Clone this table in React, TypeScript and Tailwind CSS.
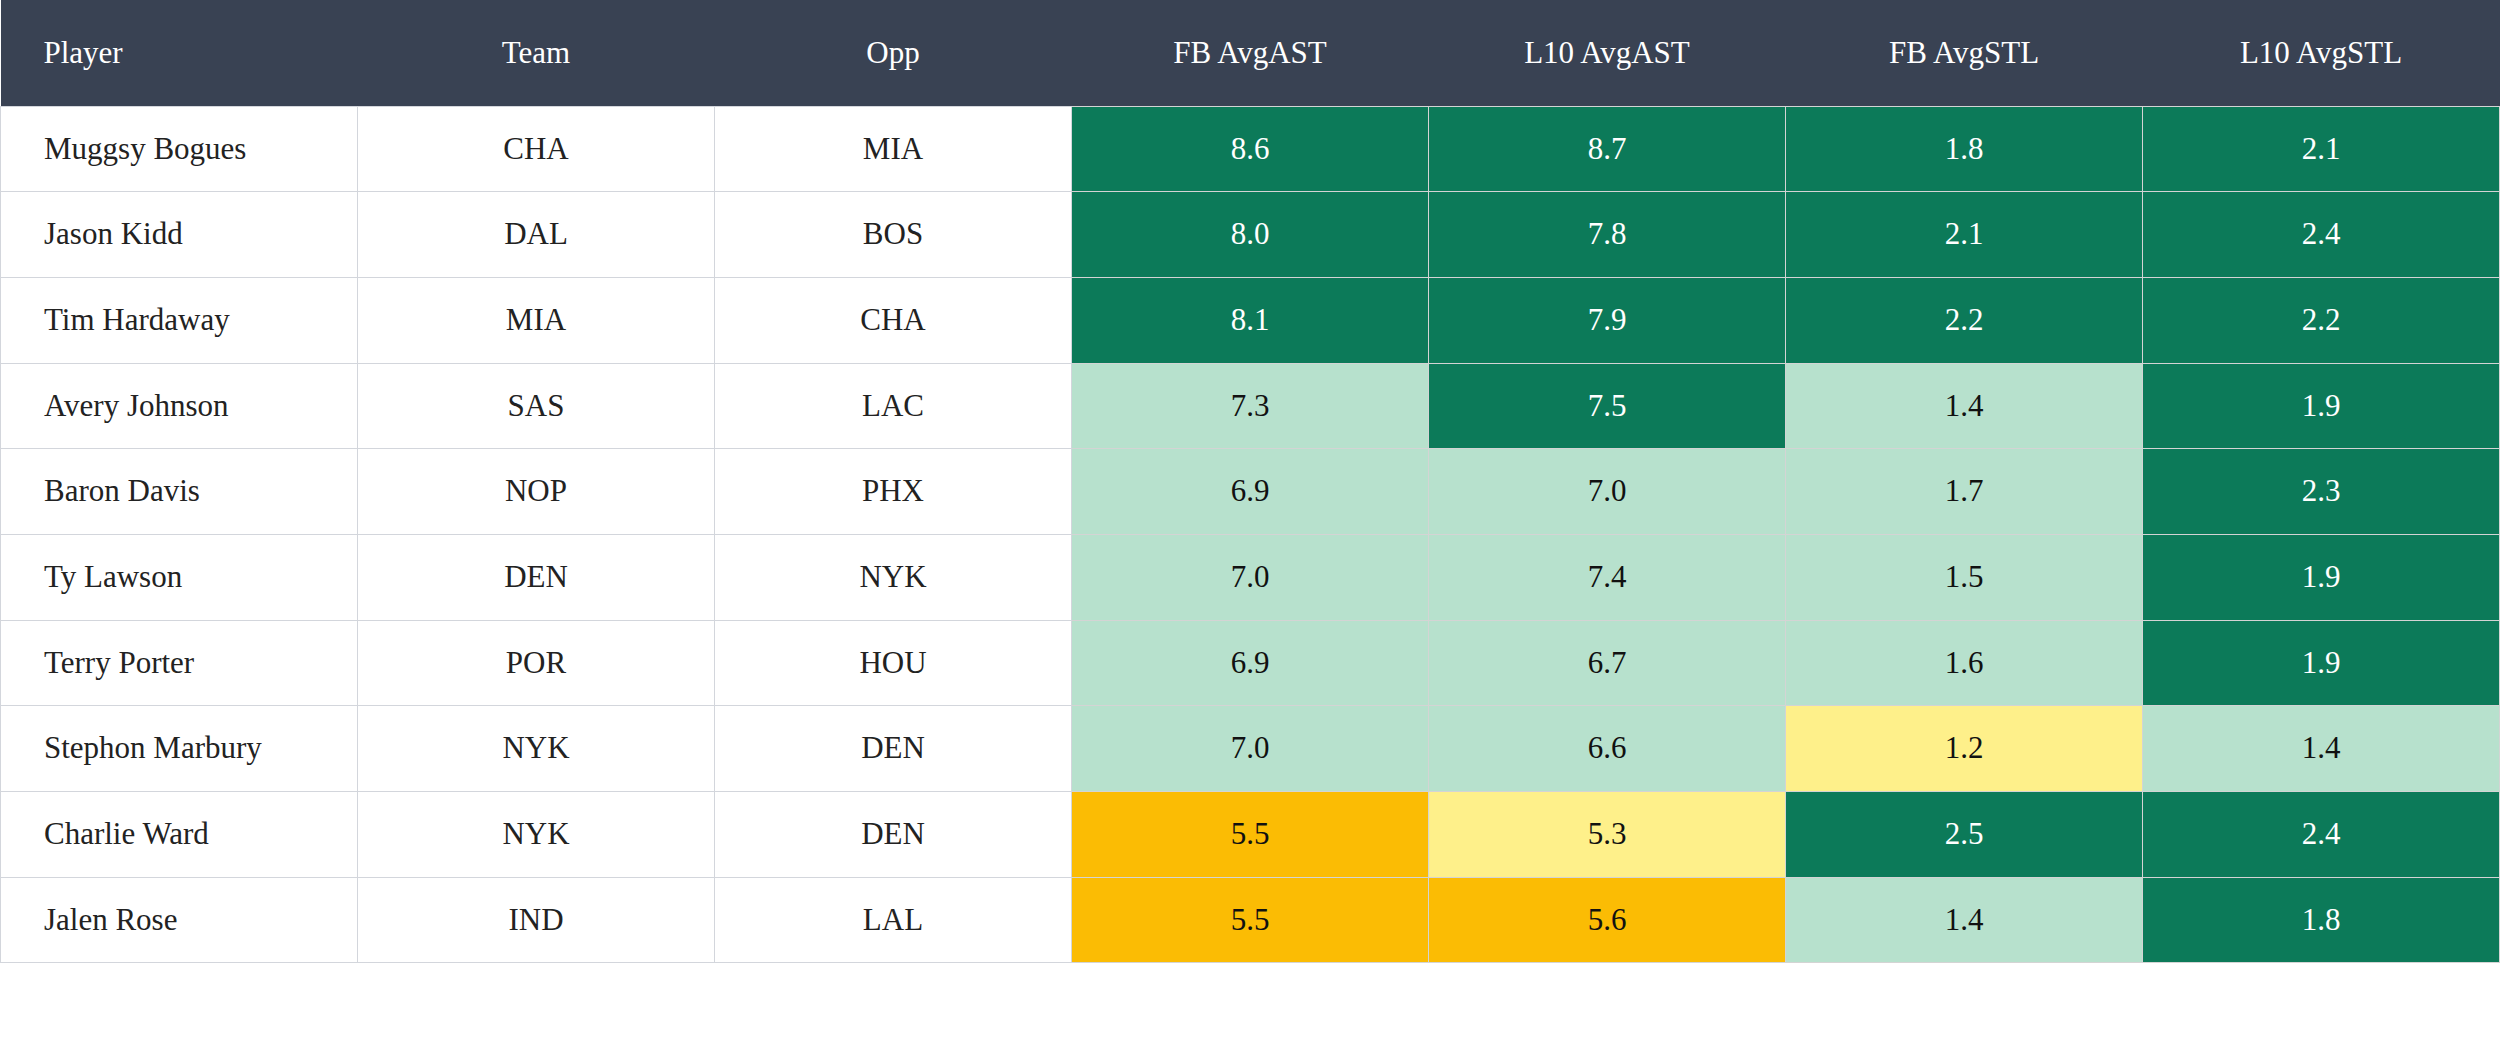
type Level = 'high' | 'mid' | 'low' | 'bad';

type Row = {
  player: string;
  team: string;
  opp: string;
  stats: [number, Level][];
};

const rows: Row[] = [
  { player: 'Muggsy Bogues', team: 'CHA', opp: 'MIA', stats: [[8.6, 'high'], [8.7, 'high'], [1.8, 'high'], [2.1, 'high']] },
  { player: 'Jason Kidd', team: 'DAL', opp: 'BOS', stats: [[8.0, 'high'], [7.8, 'high'], [2.1, 'high'], [2.4, 'high']] },
  { player: 'Tim Hardaway', team: 'MIA', opp: 'CHA', stats: [[8.1, 'high'], [7.9, 'high'], [2.2, 'high'], [2.2, 'high']] },
  { player: 'Avery Johnson', team: 'SAS', opp: 'LAC', stats: [[7.3, 'mid'], [7.5, 'high'], [1.4, 'mid'], [1.9, 'high']] },
  { player: 'Baron Davis', team: 'NOP', opp: 'PHX', stats: [[6.9, 'mid'], [7.0, 'mid'], [1.7, 'mid'], [2.3, 'high']] },
  { player: 'Ty Lawson', team: 'DEN', opp: 'NYK', stats: [[7.0, 'mid'], [7.4, 'mid'], [1.5, 'mid'], [1.9, 'high']] },
  { player: 'Terry Porter', team: 'POR', opp: 'HOU', stats: [[6.9, 'mid'], [6.7, 'mid'], [1.6, 'mid'], [1.9, 'high']] },
  { player: 'Stephon Marbury', team: 'NYK', opp: 'DEN', stats: [[7.0, 'mid'], [6.6, 'mid'], [1.2, 'low'], [1.4, 'mid']] },
  { player: 'Charlie Ward', team: 'NYK', opp: 'DEN', stats: [[5.5, 'bad'], [5.3, 'low'], [2.5, 'high'], [2.4, 'high']] },
  { player: 'Jalen Rose', team: 'IND', opp: 'LAL', stats: [[5.5, 'bad'], [5.6, 'bad'], [1.4, 'mid'], [1.8, 'high']] },
];

const levelClass: Record<Level, string> = {
  high: 'bg-[#0c7a59] text-white',
  mid: 'bg-[#b7e1cd] text-[#111]',
  low: 'bg-[#fef08a] text-[#111]',
  bad: 'bg-[#fbbc04] text-[#111]',
};

const headers = ['Team', 'Opp', 'FB AvgAST', 'L10 AvgAST', 'FB AvgSTL', 'L10 AvgSTL'];

export default function App() {
  return (
    <div className="min-h-[1050px] w-[2500px] bg-white font-['Liberation_Serif',Georgia,serif] text-[31px]">
      <table className="w-full table-fixed border-collapse">
        <thead>
          <tr className="h-[106px] bg-[#394253] text-white">
            <th className="pl-[43px] text-left font-normal">Player</th>
            {headers.map((h) => (
              <th key={h} className="text-center font-normal">
                {h}
              </th>
            ))}
          </tr>
        </thead>
        <tbody>
          {rows.map((r) => (
            <tr key={r.player} className="h-[85.7px]">
              <td className="border border-[#d3d6dc] pl-[43px] text-[#222]">{r.player}</td>
              <td className="border border-[#d3d6dc] text-center text-[#222]">{r.team}</td>
              <td className="border border-[#d3d6dc] text-center text-[#222]">{r.opp}</td>
              {r.stats.map(([v, lvl], i) => (
                <td key={i} className={`border border-[#d4d4d4] text-center ${levelClass[lvl]}`}>
                  {v.toFixed(1)}
                </td>
              ))}
            </tr>
          ))}
        </tbody>
      </table>
    </div>
  );
}
